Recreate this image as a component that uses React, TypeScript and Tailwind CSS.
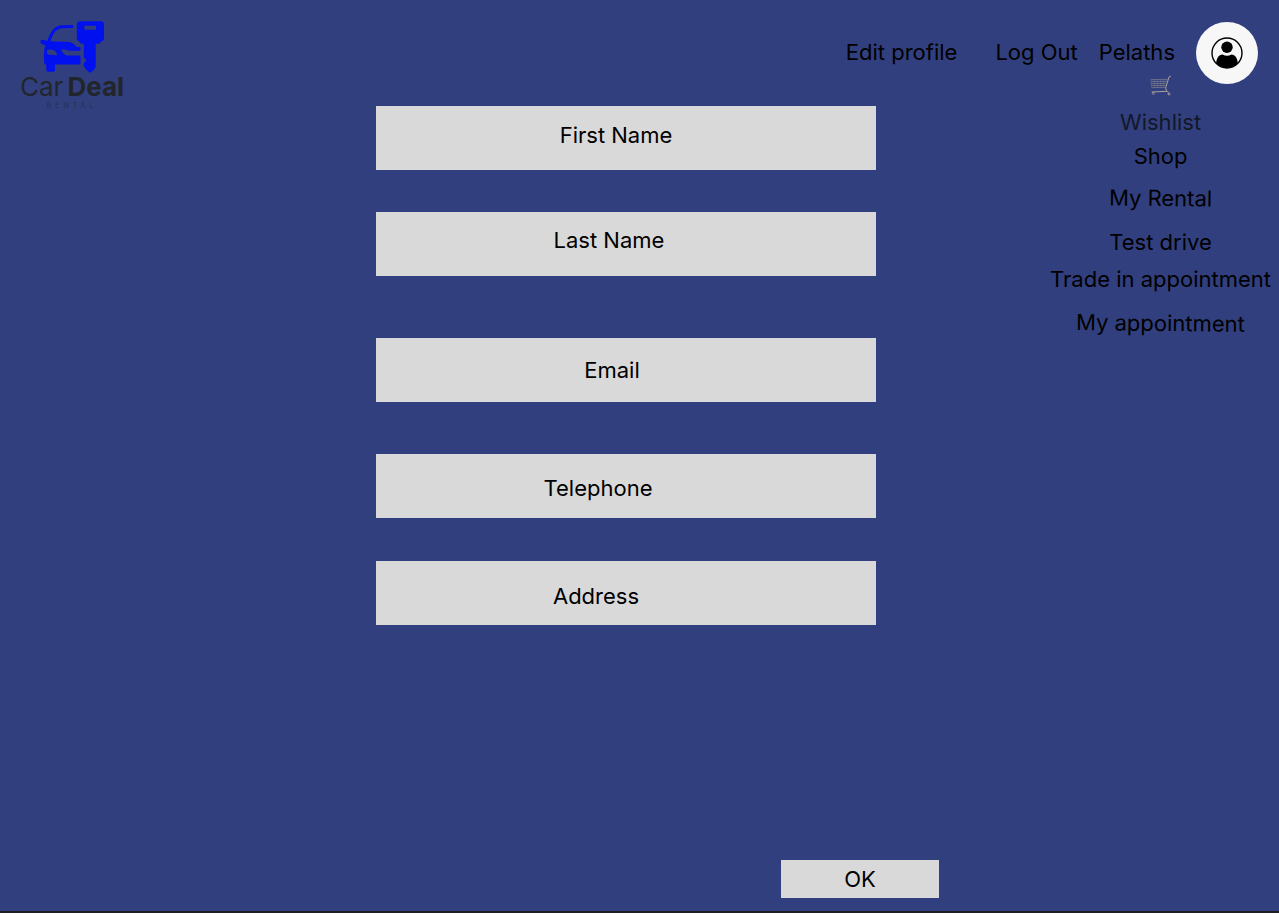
import React from "react";

const fields = [
  { id: "firstName", label: "First Name", type: "text", box: "mb-[42px]", text: "pr-5 pb-1.5" },
  { id: "lastName", label: "Last Name", type: "text", box: "mb-[62px]", text: "pr-[34px] pb-2" },
  { id: "email", label: "Email", type: "email", box: "mb-[52px]", text: "pr-7" },
  { id: "telephone", label: "Telephone", type: "tel", box: "mb-[43px]", text: "pr-14 pt-1" },
  { id: "address", label: "Address", type: "text", box: "", text: "pr-15 pt-1.5" },
];

const menu = [
  { label: "Wishlist", className: "mt-[11px] text-[#111827]" },
  { label: "Shop", className: "mt-1.5" },
  { label: "My Rental", className: "mt-3.5 rotate-[0.6deg]" },
  { label: "Test drive", className: "mt-4" },
  { label: "Trade in appointment", className: "mt-[9px]" },
  { label: "My appointment", className: "mt-4 rotate-[0.6deg]" },
];

function Logo() {
  return (
    <a href="#" aria-label="Car Deal Rental" className="flex flex-col items-center text-[#222529]">
      <svg viewBox="88 30 196 162" className="h-[54px] w-[65px]" fill="#0010ee" aria-hidden="true">
        <path
          d="M188 49 C160 49 142 49 133 59 C124 68 118 82 114 96"
          fill="none"
          stroke="#0010ee"
          strokeWidth="9"
        />
        <path
          fillRule="evenodd"
          d="M89 91 Q98 88 108 92 L114 94 L178 96 Q188 98 198 110 L210 112 V122 H175 Q165 118 152 118 Q154 130 168 137 H210 V164 H133 V180 Q132 186 126 186 H113 Q107 186 107 180 V166 L101 160 Q98 127 104 106 L91 101 Z M109 121 Q106 132 116 134 L139 136 Q140 122 125 119 Q114 117 109 121 Z"
        />
        <path
          fillRule="evenodd"
          stroke="#313f7e"
          strokeWidth="5"
          paintOrder="stroke"
          d="M210 33 H271 Q281 33 281 43 V83 Q281 92 272 95 L265 101 H256 V170 Q254 178 240 189 Q225 180 220 169 V160 L228 151 L220 143 V101 H212 L206 95 Q199 92 199 83 V43 Q199 33 210 33 Z M222 47 V59 H257 V47 Z"
        />
      </svg>
      <span className="flex gap-1 text-[26px] leading-[26px]">
        <span>Car</span>
        <span className="font-bold">Deal</span>
      </span>
      <span className="text-[7px] leading-3 tracking-[4px] text-[#27304f]">RENTAL</span>
    </a>
  );
}

function Avatar() {
  return (
    <button type="button" aria-label="Account" className="size-[62px] rounded-full bg-[#f7f7f7]">
      <svg viewBox="0 0 62 62" className="size-full" aria-hidden="true">
        <defs>
          <clipPath id="avatar-disc">
            <circle cx="31" cy="31" r="15" />
          </clipPath>
        </defs>
        <circle cx="31" cy="31" r="15" fill="none" stroke="#000" strokeWidth="1.4" />
        <circle cx="31" cy="25.3" r="5.7" />
        <path
          clipPath="url(#avatar-disc)"
          d="M20 44 C20 36 23 32.5 26.5 32.5 Q31 35 35.5 32.5 C39 32.5 42 36 42 44 L38 48 H24 Z"
        />
      </svg>
    </button>
  );
}

function Cart() {
  return (
    <svg viewBox="0 0 66 66" className="size-[22px]" fill="none" stroke="#85858c" strokeWidth="2" aria-hidden="true">
      <path d="M63 3 L57 6 L47 39 L50 49 L56 52" stroke="#a8a29c" strokeWidth="3" />
      <path d="M2 14 L54 13 M3 20 L52 19 M3 26 L50 25 M4 32 L49 31 M5 38 L47 37" />
      <path d="M2 14 L5 39 M12 14 L14 38 M22 14 L23 38 M32 14 L32 37 M42 13 L40 37" strokeWidth="1" />
      <path d="M5 51 L50 49" stroke="#a8a29c" strokeWidth="3" />
      <circle cx="10" cy="55" r="3" stroke="#b5aa98" />
      <circle cx="57" cy="57" r="3" stroke="#c5bba8" />
    </svg>
  );
}

export default function App() {
  return (
    <div className="flex min-h-screen flex-col border-b-2 border-[#1e1e24] bg-[#313f7e] font-['Inter',sans-serif] text-[22px] leading-7 text-black">
      <header className="flex h-[75px] items-start justify-between pl-5 pr-[21px]">
        <div className="pt-5">
          <Logo />
        </div>
        <nav aria-label="Account" className="flex items-center pt-[22px]">
          <a href="#" className="mr-[38px] pb-0.5">Edit profile</a>
          <a href="#" className="mr-[21px] pb-0.5">Log Out</a>
          <a href="#" className="mr-[21px] pb-0.5">Pelaths</a>
          <Avatar />
        </nav>
      </header>

      <main className="flex grow flex-col">
        <div className="grid grid-cols-[376fr_500px_403fr]">
          <form id="profile" className="col-start-2 flex flex-col pt-[31px]">
            {fields.map((f) => (
              <div key={f.id} className={`grid ${f.box}`}>
                <input
                  id={f.id}
                  type={f.type}
                  placeholder=" "
                  className="peer col-start-1 row-start-1 h-16 w-full bg-[#d9d9d9] px-4 text-center"
                />
                <label
                  htmlFor={f.id}
                  className={`pointer-events-none invisible col-start-1 row-start-1 flex items-center justify-center peer-placeholder-shown:visible ${f.text}`}
                >
                  {f.label}
                </label>
              </div>
            ))}
          </form>
          <nav aria-label="Main" className="flex flex-col items-center justify-self-end pr-2">
            <a href="#" aria-label="Cart">
              <Cart />
            </a>
            {menu.map((m) => (
              <a key={m.label} href="#" className={m.className}>{m.label}</a>
            ))}
          </nav>
        </div>
        <div className="mt-auto flex justify-end pb-[13px] pr-[340px] pt-8">
          <button type="submit" form="profile" className="h-[38px] w-[158px] bg-[#d9d9d9]">OK</button>
        </div>
      </main>
    </div>
  );
}
